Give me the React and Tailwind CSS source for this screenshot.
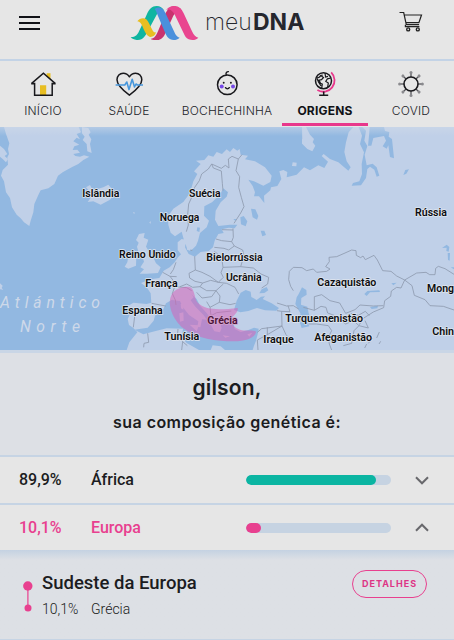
const LABEL_FONT = '"Roboto", "Liberation Sans", sans-serif';

const tabs = [
  { id: 'inicio', label: 'INÍCIO', width: 'w-[86px]', Icon: HomeIcon },
  { id: 'saude', label: 'SAÚDE', width: 'w-[86px]', Icon: HeartIcon },
  { id: 'bochechinha', label: 'BOCHECHINHA', width: 'w-[110px]', Icon: BabyIcon },
  { id: 'origens', label: 'ORIGENS', width: 'w-[86px]', Icon: GlobeIcon },
  { id: 'covid', label: 'COVID', width: 'w-[86px]', Icon: VirusIcon },
];

const regions = [
  { name: 'África', percent: '89,9%', value: 89.9, open: false },
  { name: 'Europa', percent: '10,1%', value: 10.1, open: true },
];

// x, baseline and width of each country name, in map units (3 per pixel)
const countries = [
  ['Islândia', 247, 219, 111],
  ['Suécia', 567, 219, 95],
  ['Noruega', 479, 290, 119],
  ['Rússia', 1245, 276, 96],
  ['Reino Unido', 357, 403, 170],
  ['Bielorrússia', 619, 412, 169],
  ['Ucrânia', 678, 471, 107],
  ['França', 436, 490, 97],
  ['Cazaquistão', 952, 486, 177],
  ['Mong', 1281, 503, 81],
  ['Espanha', 367, 569, 121],
  ['Grécia', 622, 599, 91],
  ['Turquemenistão', 856, 593, 233],
  ['Chin', 1297, 632, 65],
  ['Tunísia', 493, 647, 105],
  ['Iraque', 790, 658, 91],
  ['Afeganistão', 943, 650, 173],
];

function Logo() {
  return (
    <svg viewBox="390 15 207 108" className="h-9 w-[69px]">
      <path fill="#c9336f" d="M452 116 C462 117 468 108 474 94 L494 46 C502 27 511 18 524 18 L543 27 C530 28 524 40 518 52 L494 104 C487 118 476 121 466 120 C460 120 455 119 452 116Z" />
      <path fill="#0fb5a1" d="M392 112 C408 112 413 104 420 88 L440 44 C447 27 456 18 470 18 C480 18 488 24 493 32 C482 28 476 34 470 44 L437 105 C430 117 420 121 410 120 C402 119 396 116 392 112Z" />
      <path fill="#e8be22" d="M412 64 C418 55 431 51 439 58 C446 64 450 78 456 88 C460 97 464 98 468 97 C466 106 458 112 450 111 C440 108 436 99 431 88 C425 72 421 65 412 64Z" />
      <path fill="#4a90dc" d="M464 27 C476 18 489 23 496 38 L522 94 C527 106 532 112 539 113 C532 120 520 122 511 118 C504 115 500 108 496 100 L474 48 C470 38 468 31 464 27Z" />
      <path fill="#e9458f" d="M498 30 C506 20 515 18 524 18 C537 18 545 27 551 40 L576 94 C582 106 587 112 595 113 C588 121 576 122 566 118 C558 115 555 108 551 100 L525 46 C518 31 509 26 498 30Z" />
    </svg>
  );
}

function CartIcon() {
  return (
    <svg viewBox="0 0 24 22" className="h-[22px] w-6" fill="none" stroke="#222" strokeWidth="1.2">
      <path d="M.5 1.500h4.200l2.600 12.200h12.800M5.300 4h17.200l-2.600 7.600H6.800M6.400 13.700v2h14" />
      <circle cx="9.200" cy="18.400" r="1.500" strokeWidth="1.400" />
      <circle cx="18.800" cy="18.400" r="1.500" strokeWidth="1.400" />
    </svg>
  );
}

function HomeIcon() {
  return (
    <svg viewBox="0 0 28 28" className="size-7" fill="none">
      <path fill="#e8be22" d="M17.700 3.200h3.800v6.500l-3.800-3.600zM11 15.300h6.200v9.900H11z" />
      <path stroke="#18181c" strokeWidth="1.500" d="M5.600 12.800v12.500h17.600V12.800M2.200 13.700h3.400M23.200 13.700h3.400M2.400 13.600 14.400 3.300l12 10.300" />
    </svg>
  );
}

function HeartIcon() {
  return (
    <svg viewBox="0 0 28 28" className="size-7" fill="none" strokeLinecap="round" strokeLinejoin="round">
      <path stroke="#18181c" strokeWidth="1.500" d="M14.400 25.200C9 21.200 2 15.500 2 9.800 2 5.900 4.800 3.200 8.200 3.200c2.700 0 4.800 1.400 6.200 3.600 1.400-2.200 3.500-3.600 6.200-3.600 3.400 0 6.200 2.700 6.200 6.600 0 5.700-7 11.400-12.400 15.400z" />
      <path stroke="#4797dc" strokeWidth="1.600" d="M1.200 15h8.600l2-3 2.200 7.600 3.200-10.400 2.300 7.800 1.500-3 1.500 1h5" />
    </svg>
  );
}

function BabyIcon() {
  return (
    <svg viewBox="0 0 28 28" className="size-7" fill="none" strokeLinecap="round">
      <circle cx="14.300" cy="14.800" r="9.800" stroke="#18181c" strokeWidth="1.500" />
      <path stroke="#18181c" strokeWidth="1.400" d="M13.200 4.600c-.6-1.600.2-2.900 2.200-3M12.500 17.700c.9 1.500 2.900 1.500 3.800 0" />
      <circle cx="10.700" cy="12.700" r=".95" fill="#18181c" />
      <circle cx="17.900" cy="12.700" r=".95" fill="#18181c" />
      <circle cx="8.700" cy="16.600" r="2" fill="#7548e6" />
      <circle cx="20" cy="16.600" r="2" fill="#7548e6" />
    </svg>
  );
}

function GlobeIcon() {
  return (
    <svg viewBox="0 0 28 28" className="size-7" fill="none">
      <circle cx="12.500" cy="10.700" r="8" stroke="#18181c" strokeWidth="1.500" />
      <path stroke="#18181c" strokeWidth="1.200" d="M5.500 8c2.500-.2 3.600-1 4.200-2.500l2-.4M9.700 5.500l2.800 2-2 2.200-2.500.4 1.500 3.200 1.800.8-.6 4M6 8.500l1.500 3.500 2.500 4M14 3.200l.6 3.800 2.400-.6M19.800 8l-3.400.8-1.600 2.600 2.500 1.600-.6 4" />
      <path stroke="#e8388c" strokeWidth="1.800" d="M20.200 2.400A11.300 11.300 0 0 1 6.400 20.100" />
      <path stroke="#18181c" strokeWidth="1.500" d="M12.700 21.500v3.300M8.200 25.300h9" />
    </svg>
  );
}

function VirusIcon() {
  const spikes = [0, 45, 90, 135, 180, 225, 270, 315];
  return (
    <svg viewBox="0 0 28 28" className="size-7">
      {spikes.map((angle) => (
        <g key={angle} transform={`rotate(${angle} 14 14)`}>
          <path stroke="#55555a" strokeWidth="1.300" d="M14 3v4" />
          <circle cx="14" cy="2.600" r="1.500" fill="#8a8a8e" />
        </g>
      ))}
      <circle cx="14" cy="14" r="7" fill="#e6e6e6" stroke="#18181c" strokeWidth="1.600" />
    </svg>
  );
}

function Map() {
  return (
    <svg viewBox="0 9 1362 669" className="block h-[223px] w-full">
      <defs>
        <linearGradient id="shade" x1="0" y1="0" x2="0" y2="1">
          <stop offset="0" stopColor="#cfd9e8" stopOpacity="0.55" />
          <stop offset="1" stopColor="#cfd9e8" stopOpacity="0" />
        </linearGradient>
      </defs>
      <rect y="9" width="1362" height="669" fill="#92b8e1" />

      {/* land */}
      <g fill="#c0d0e8">
        <path d="M12 9 L18 30 L28 58 L24 75 L27 90 L22 100 L24 122 L8 138 L3 155 L12 172 L18 205 L30 222 L36 250 L50 272 L62 283 L72 295 L88 306 L92 290 L100 265 L103 240 L115 213 L122 199 L145 193 L163 180 L174 155 L188 145 L215 130 L235 120 L250 108 L268 98 L252 94 L240 98 L226 96 L220 90 L240 86 L232 77 L218 78 L223 67 L238 62 L220 52 L230 41 L240 46 L230 30 L243 25 L236 9Z" />
        <path d="M246 9 L265 12 L272 25 L266 32 L274 46 L270 60 L275 87 L262 82 L260 60 L248 48 L254 38 L246 28Z" />
        <path d="M0 65 L12 75 L22 90 L14 96 L24 105 L18 115 L8 105 L0 98Z" />
        <path d="M0 478 L8 485 L5 492 L10 497 L0 496Z" />
        <path d="M258 190 L270 183 L279 200 L295 194 L310 190 L325 182 L336 195 L342 212 L330 227 L302 242 L280 232 L263 234 L272 221 L260 212 L270 203Z" />
        <path d="M417 330 L434 327 L431 341 L445 347 L438 368 L447 382 L458 397 L468 418 L482 430 L474 447 L440 449 L419 449 L432 436 L421 430 L432 413 L428 400 L416 386 L411 368 L416 356 L408 348Z" />
        <path d="M385 398 L396 390 L409 396 L408 425 L385 434 L374 428 L382 415Z" />
        <path d="M399 264 L405 266 L402 270Z M448 295 L453 292 L451 300Z" />
        <path d="M385 545 L400 536 L440 540 L454 536 L452 508 L440 490 L423 477 L440 470 L457 465 L478 462 L491 440 L509 430 L524 415 L534 400 L543 391 L533 378 L533 355 L545 345 L558 348 L555 370 L566 390 L585 398 L602 384 L626 381 L639 370 L644 350 L655 330 L671 327 L665 316 L686 311 L704 313 L712 302 L690 302 L655 306 L645 287 L647 260 L662 235 L680 218 L684 205 L670 193 L660 212 L636 235 L613 247 L612 275 L627 290 L620 310 L600 327 L594 350 L588 365 L575 378 L561 372 L551 345 L545 323 L525 337 L512 326 L505 302 L504 277 L520 254 L550 234 L570 207 L580 172 L592 150 L582 142 L602 120 L588 110 L613 108 L625 94 L640 98 L650 84 L666 90 L680 76 L690 84 L700 72 L712 80 L719 75 L722 92 L744 95 L735 106 L765 112 L795 130 L815 155 L811 174 L790 185 L762 172 L745 167 L758 186 L765 205 L762 217 L777 217 L793 237 L792 215 L811 199 L813 190 L832 186 L844 165 L838 142 L850 138 L862 144 L860 160 L890 152 L912 130 L930 139 L955 124 L973 132 L984 113 L965 96 L971 90 L990 105 L1015 115 L1045 140 L1052 130 L1040 112 L1033 84 L1038 55 L1046 25 L1060 9 L1362 9 L1362 678 L380 678 L388 655 L412 625 L400 612 L387 603 L383 585 L393 564Z" />
        <path d="M906 9 L918 9 L930 32 L942 45 L938 55 L946 65 L937 82 L922 75 L907 60Z M878 115 L890 116 L889 127 L876 126Z M906 45 L912 55 L906 60Z M560 363 L573 365 L570 380 L561 377Z" />
      </g>

      {/* inner seas and lakes */}
      <g fill="#92b8e1">
        <path d="M403 617 L443 611 L461 590 L465 575 L490 556 L498 538 L515 528 L540 520 L575 512 L590 525 L600 545 L620 567 L629 580 L630 598 L643 622 L660 625 L665 612 L661 600 L672 585 L695 582 L700 595 L704 615 L722 624 L745 618 L762 611 L776 614 L773 631 L768 650 L762 665 L758 678 L675 678 L662 667 L638 664 L632 678 L597 678 L560 657 L545 640 L549 614 L500 613 L470 620 L430 631Z" />
        <path d="M702 558 L710 530 L722 506 L737 498 L752 503 L754 519 L770 528 L783 518 L795 517 L788 525 L815 538 L837 552 L829 560 L795 559 L771 552 L745 561 L721 565Z" />
        <path d="M778 508 L785 496 L800 489 L805 499 L793 507Z" />
        <path d="M896 510 L906 490 L919 498 L920 512 L904 522 L903 542 L922 548 L926 568 L930 580 L921 590 L928 607 L905 612 L901 600 L893 585 L902 570 L886 540 L890 520Z" />
        <path d="M1087 9 L1098 20 L1093 50 L1102 66 L1094 92 L1100 124 L1118 119 L1130 130 L1138 155 L1130 158 L1123 137 L1110 128 L1102 135 L1098 162 L1083 184 L1055 185 L1059 177 L1078 172 L1086 150 L1085 120 L1092 85 L1080 60 L1086 35 L1076 9Z" />
        <path d="M1109 9 L1152 9 L1155 21 L1168 24 L1166 38 L1176 45 L1182 103 L1170 99 L1165 64 L1160 74 L1148 67 L1158 50 L1152 36 L1120 42 L1114 65 L1104 65 L1107 35Z" />
        <path d="M721 280 L731 276 L742 292 L737 307 L723 301Z M753 254 L766 256 L775 276 L771 287 L758 280Z M782 320 L793 320 L798 333 L787 337Z M700 285 L709 285 L706 291Z M592 310 L600 311 L598 324 L590 321Z" />
        <path d="M1093 510 L1102 501 L1138 499 L1140 504 L1110 505 L1100 516Z M1110 549 L1134 545 L1132 553 L1115 555Z M1174 478 L1190 476 L1180 484Z M1210 153 L1216 138 L1227 136 L1219 149Z M1326 372 L1340 362 L1348 369 L1346 383 L1339 381 L1340 371Z M1343 387 L1350 387 L1349 410 L1344 408Z M1352 430 L1362 430 L1362 436Z" />
      </g>

      {/* Italy, the islands and Greece */}
      <g fill="#c0d0e8">
        <path d="M515 528 L530 518 L572 508 L581 520 L572 529 L585 547 L610 572 L621 587 L606 586 L601 610 L592 608 L595 592 L567 573 L548 549 L540 531Z" />
        <path d="M569 602 L597 604 L590 622Z M538 568 L550 565 L551 590 L540 593Z M542 540 L550 538 L550 557 L543 553Z M668 634 L690 637 L676 641Z M742 631 L757 626 L748 638Z" />
      </g>

      {/* borders */}
      <g fill="none" stroke="#8e9aae" strokeWidth="2.500" strokeLinejoin="round">
        <path d="M559 323 L565 303 L563 272 L566 240 L576 218 L584 190 L598 170 L605 150 L625 135 L635 120 L664 133 L676 124 L687 132 L685 105 L696 97 L715 105 L726 92 M635 120 L640 132 L664 141 L667 178 L669 200 M715 105 L708 140 L719 158 L716 190 L724 220 L732 248 L722 267 L702 298" />
        <path d="M666 317 L699 318 M699 313 L700 340 L695 353 L665 350 L648 345 M695 353 L703 366 L686 378 L672 373 L643 370 M703 366 L728 378 L732 395 L722 428 L669 430 L665 400 L643 382 M669 430 L663 446 L670 460 L655 475 M584 397 L586 438 L567 448 L569 462 L585 472 L608 477 L632 469 L655 475 M586 438 L606 445 L630 457 L655 475 L680 478 L705 490 L716 510 M722 428 L760 432 L783 450 L806 460 L803 480 L785 492 M608 477 L600 488 L578 490 L560 480 L540 488 M600 488 L620 500 L648 500 L670 480 M590 505 L606 522 L635 518 L648 500 L660 516 L658 535 L630 550 L620 533 M658 535 L690 542 L707 538 M630 550 L633 575 L650 566 L694 561" />
        <path d="M488 445 L510 457 L530 458 M510 457 L520 470 L524 488 L517 509 L526 528 L528 543 M524 488 L560 491 L575 500 M528 415 L520 437 L511 450 M572 379 L577 379 M455 538 L497 546 M399 560 L404 577 L400 610 M443 628 L446 655 L432 658 L431 670 M534 615 L532 637 L548 653 L545 678 M548 653 L562 665" />
        <path d="M831 537 L860 546 L880 545 L896 555 M831 560 L845 562 L870 563 L864 545 M845 562 L846 606 L785 614 L772 625 M846 606 L858 632 L880 655 M802 610 L802 632 L772 648 L774 678 M802 632 L846 606" />
        <path d="M906 431 L920 440 L940 435 L950 445 L980 442 L990 435 L977 428 L988 413 L987 400 L1010 398 L1035 387 L1055 378 L1068 380 L1069 394 L1082 401 L1089 396 L1096 407 L1122 394 L1132 408 L1148 440 L1173 442 L1190 456 L1214 468 M906 431 L880 430 L868 442 L866 467 L872 487 L880 500" />
        <path d="M1214 468 L1250 447 L1278 445 L1289 452 L1305 452 L1307 433 L1315 427 L1335 434 L1362 451 M1214 468 L1236 485 L1243 514 L1275 527 L1290 545 L1330 547 L1362 558 M1214 468 L1203 492 L1190 490 L1174 501 L1172 517 L1154 530 L1151 551 L1120 564 L1090 583 L1078 602" />
        <path d="M943 559 L943 518 L965 512 L990 530 L1019 537 L1037 568 L1065 557 L1080 543 L1120 546 L1150 545 M943 559 L910 550 M943 559 L963 547 L978 550 L983 567 L1005 575 L1037 600 L1060 590 L1077 605 L1062 620 L1055 658 L1030 665 M1052 568 L1075 574 L1096 562 L1108 575 M1060 590 L1085 580 M1077 605 L1105 612 L1095 590 M926 600 L950 600 L985 605 L995 620 L985 640 L988 660 L995 678 M950 625 L962 650 M1100 660 L1094 672 M1138 624 L1130 642 M1142 652 L1137 660 M1118 642 L1105 658" />
      </g>

      {/* ancestry area */}
      <path fill="#d65fb6" fillOpacity="0.52" d="M516 510 C526 494 548 487 567 488 C585 492 582 520 592 535 C614 560 660 558 713 552 C715 562 706 570 697 580 C690 600 702 611 720 617 C740 623 756 616 768 623 C766 642 735 652 700 652 C650 652 590 645 550 613 C520 588 498 540 516 510Z" />

      <g fill="#ced9e9" fontFamily='"Roboto", "Noto Sans", sans-serif' fontStyle="italic" fontSize="47">
        <text x="0" y="552" textLength="300" lengthAdjust="spacing">Atlántico</text>
        <text x="60" y="624" textLength="180" lengthAdjust="spacing">Norte</text>
      </g>

      <g fontFamily={LABEL_FONT} fontWeight="600" fontSize="33" fill="#0c0d10" stroke="#dfe5ee" strokeWidth="5" strokeLinejoin="round" paintOrder="stroke">
        {countries.map(([name, x, y, length]) => (
          <text
            key={name}
            x={x}
            y={y}
            textLength={length}
            lengthAdjust="spacingAndGlyphs"
            fill={name === 'Grécia' ? '#4a1238' : undefined}
            stroke={name === 'Grécia' ? '#d6a5cd' : undefined}
          >
            {name}
          </text>
        ))}
      </g>
      <rect y="9" width="1362" height="27" fill="url(#shade)" />
    </svg>
  );
}

function Chevron({ up }) {
  return (
    <svg viewBox="0 0 14 9" className={`h-[9px] w-3.5 ${up ? 'rotate-180' : ''}`} fill="none" stroke="#68686c" strokeWidth="2">
      <path d="M1 1.300 7 7.300l6-6" />
    </svg>
  );
}

function RegionRow({ region }) {
  const color = region.open ? 'text-[#e8408f]' : 'text-[#1b1c21]';
  const bar = region.open ? 'bg-[#e8408f]' : 'bg-[#0bb5a2]';
  return (
    <div className={`flex items-center bg-[#e6e6e6] pl-[19px] text-base font-[550] ${region.open ? 'h-[45px]' : 'h-[46px]'} ${color}`}>
      <span className="w-[72px]">{region.percent}</span>
      <span className="w-[155px]">{region.name}</span>
      <div className="h-2.5 w-[145px] overflow-hidden rounded-full bg-[#c6d3e2]">
        <div className={`h-full rounded-full ${bar}`} style={{ width: `${region.value}%` }} />
      </div>
      <div className="ml-6"><Chevron up={region.open} /></div>
    </div>
  );
}

export default function App() {
  return (
    <div className="flex h-[640px] w-[454px] flex-col overflow-hidden bg-[#dde0e5] font-[Roboto,'Liberation_Sans',sans-serif] text-[#1b1c21]">
      <header className="flex h-[59px] shrink-0 bg-[#e6e6e6]">
        <button className="mt-4 ml-[19px] flex h-3.5 w-[21px] flex-col justify-between" aria-label="Menu">
          <span className="h-0.5 w-full bg-[#111217]" />
          <span className="h-0.5 w-full bg-[#111217]" />
          <span className="h-0.5 w-full bg-[#111217]" />
        </button>
        <div className="mt-[5px] ml-[90px] flex">
          <Logo />
          <div className="mt-0.5 ml-1.5 flex font-[Inter,Lato,sans-serif] text-[23px] leading-[30px] text-[#25272e]">
            <span className="w-12 font-extralight">meu</span>
            <span className="font-bold">DNA</span>
          </div>
        </div>
        <button className="mt-[11px] mr-[31px] ml-auto self-start" aria-label="Carrinho"><CartIcon /></button>
      </header>

      <nav className="flex h-[68px] shrink-0 border-t-2 border-[#c3d3e6] bg-[#e6e6e6]">
        {tabs.map(({ id, label, width, Icon }) => {
          const active = id === 'origens';
          return (
            <div key={id} className={`flex flex-col items-center pt-[9px] ${width} ${active ? 'mb-px border-b-[3px] border-[#e8388c]' : ''}`}>
              <Icon />
              <span className={`mt-[5px] font-[Inter,Lato,sans-serif] text-xs leading-4 tracking-[0.2px] ${active ? 'font-bold text-[#111217]' : 'font-light text-[#222329]'}`}>{label}</span>
            </div>
          );
        })}
      </nav>

      <Map />

      <section className="flex h-[105px] shrink-0 flex-col items-center border-t-[3px] border-[#c9d6e6] pt-[21px] font-[Inter,Lato,sans-serif] font-semibold">
        <h1 className="text-[21px] leading-7 tracking-[0.15px]">gilson,</h1>
        <p className="mt-2 text-base leading-6 tracking-[0.45px]">sua composição genética é:</p>
      </section>

      <section className="flex shrink-0 flex-col gap-0.5 border-t-2 border-[#c6d4e4] bg-[#c6d4e4]">
        {regions.map((region) => <RegionRow key={region.name} region={region} />)}
      </section>

      <section className="flex flex-1 border-b border-[#c6d4e4] bg-linear-to-b from-[#c4d2e2] to-[#dde0e5] to-[10px] pt-5">
        <svg viewBox="0 0 10 32" className="mt-[11px] ml-[23px] h-8 w-2.5" fill="#e8408f">
          <circle cx="4.800" cy="5" r="4.700" />
          <path d="M4.300 5h1.200v22H4.300z" />
          <circle cx="5" cy="27" r="3.500" />
        </svg>
        <div className="ml-[9px] pt-0.5">
          <h2 className="text-[18.500px] leading-[22px] font-[550]">Sudeste da Europa</h2>
          <div className="mt-[5px] flex text-sm leading-5 font-light">
            <span className="w-[49px]">10,1%</span>
            <span>Grécia</span>
          </div>
        </div>
        <button className="mr-[27px] ml-auto h-7 w-[75px] rounded-full border border-[#e8408f] font-[Inter,Lato,sans-serif] text-[9px] font-bold tracking-[1px] text-[#dd3585]">DETALHES</button>
      </section>
    </div>
  );
}
